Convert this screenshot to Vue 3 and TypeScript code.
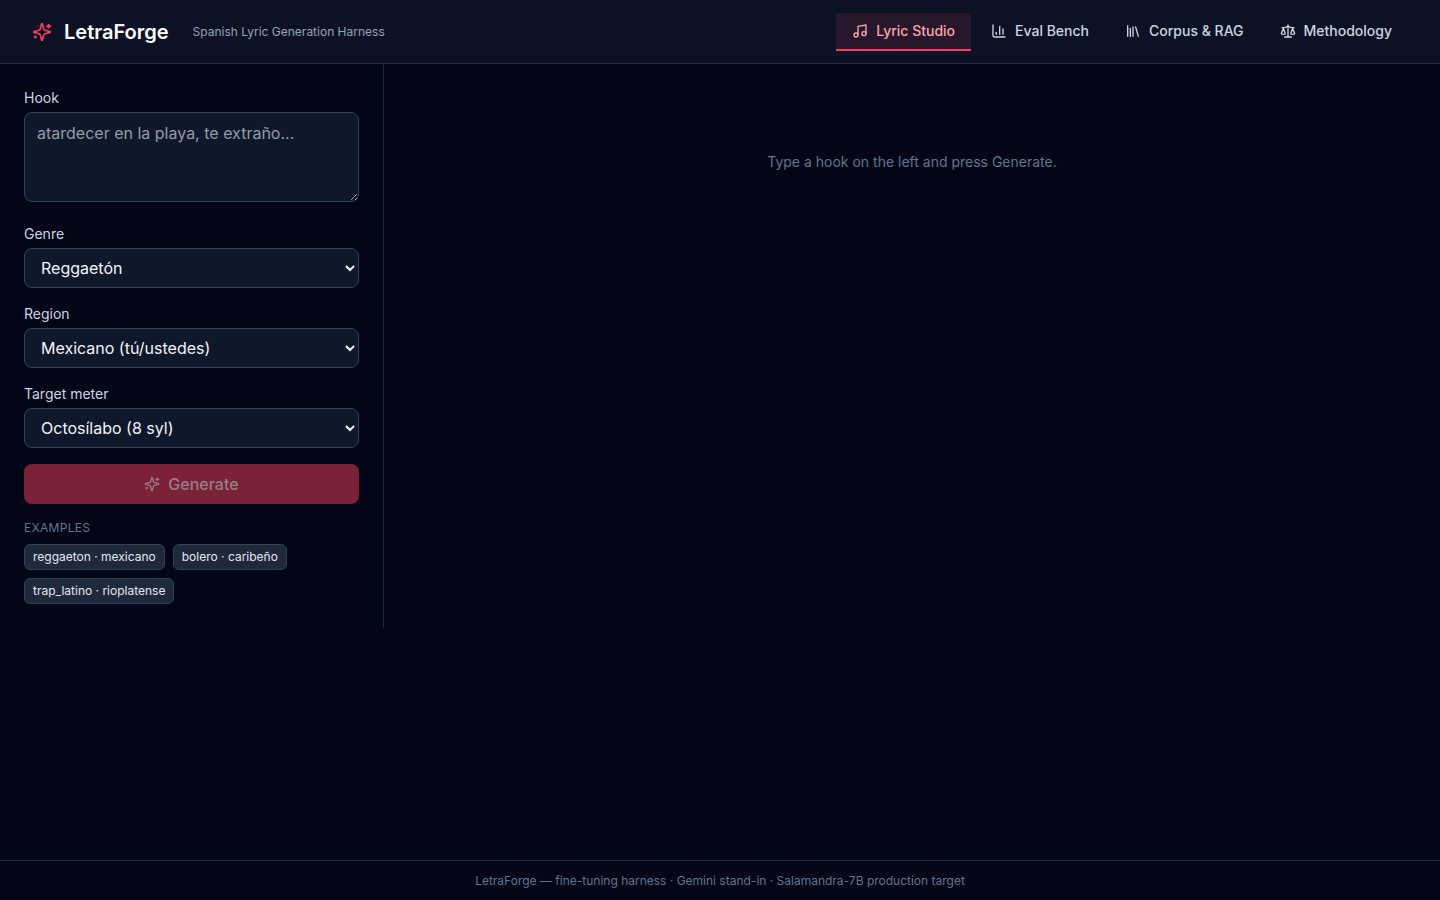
<script setup lang="ts">
import { ref } from 'vue'

interface Tab { id: string; label: string; paths: string[] }

const sparkles = [
  'M9.937 15.5A2 2 0 0 0 8.5 14.063l-6.135-1.582a.5.5 0 0 1 0-.962L8.5 9.936A2 2 0 0 0 9.937 8.5l1.582-6.135a.5.5 0 0 1 .963 0L14.063 8.5A2 2 0 0 0 15.5 9.937l6.135 1.581a.5.5 0 0 1 0 .964L15.5 14.063a2 2 0 0 0-1.437 1.437l-1.582 6.135a.5.5 0 0 1-.963 0z',
  'M20 3v4', 'M22 5h-4', 'M4 17v2', 'M5 18H3',
]

const tabs: Tab[] = [
  { id: 'studio', label: 'Lyric Studio', paths: ['M9 18V5l12-2v13', 'M9 18a3 3 0 1 1-6 0a3 3 0 1 1 6 0', 'M21 16a3 3 0 1 1-6 0a3 3 0 1 1 6 0'] },
  { id: 'eval', label: 'Eval Bench', paths: ['M3 3v16a2 2 0 0 0 2 2h16', 'M18 17V9', 'M13 17V5', 'M8 17v-3'] },
  { id: 'corpus', label: 'Corpus & RAG', paths: ['m16 6 4 14', 'M12 6v14', 'M8 8v12', 'M4 4v16'] },
  { id: 'method', label: 'Methodology', paths: ['m16 16 3-8 3 8c-.87.65-1.92 1-3 1s-2.13-.35-3-1Z', 'm2 16 3-8 3 8c-.87.65-1.92 1-3 1s-2.13-.35-3-1Z', 'M7 21h10', 'M12 3v18', 'M3 7h2c2 0 5-1 7-2 2 1 5 2 7 2h2'] },
]

const active = ref('studio')
const hook = ref('')
const fields = ref([
  { label: 'Genre', value: 'Reggaetón', options: ['Reggaetón', 'Bolero', 'Trap latino'] },
  { label: 'Region', value: 'Mexicano (tú/ustedes)', options: ['Mexicano (tú/ustedes)', 'Caribeño', 'Rioplatense'] },
  { label: 'Target meter', value: 'Octosílabo (8 syl)', options: ['Octosílabo (8 syl)'] },
])
const examples = ['reggaeton · mexicano', 'bolero · caribeño', 'trap_latino · rioplatense']
</script>

<template>
  <div class="app">
    <header class="header">
      <div class="brand">
        <svg class="icon logo" viewBox="0 0 24 24"><path v-for="d in sparkles" :key="d" :d="d" /></svg>
        <h1>LetraForge</h1>
        <span class="tagline">Spanish Lyric Generation Harness</span>
      </div>
      <nav class="tabs">
        <button v-for="t in tabs" :key="t.id" class="tab" :class="{ active: active === t.id }" @click="active = t.id">
          <svg class="icon" viewBox="0 0 24 24"><path v-for="d in t.paths" :key="d" :d="d" /></svg>
          {{ t.label }}
        </button>
      </nav>
    </header>

    <main class="main">
      <aside class="sidebar">
        <label class="field">
          <span class="label">Hook</span>
          <textarea v-model="hook" placeholder="atardecer en la playa, te extraño..."></textarea>
        </label>
        <label v-for="f in fields" :key="f.label" class="field">
          <span class="label">{{ f.label }}</span>
          <select v-model="f.value">
            <option v-for="o in f.options" :key="o">{{ o }}</option>
          </select>
        </label>
        <button class="generate" :disabled="!hook.trim()">
          <svg class="icon" viewBox="0 0 24 24"><path v-for="d in sparkles" :key="d" :d="d" /></svg>
          Generate
        </button>
        <div class="examples">
          <p class="caption">Examples</p>
          <div class="chips">
            <button v-for="e in examples" :key="e" class="chip">{{ e }}</button>
          </div>
        </div>
      </aside>
      <section class="output">
        <p>Type a hook on the left and press Generate.</p>
      </section>
    </main>

    <footer class="footer">LetraForge — fine-tuning harness · Gemini stand-in · Salamandra-7B production target</footer>
  </div>
</template>

<style>
body { margin: 0; background: #020617; }
</style>

<style scoped>
.app, .app * { box-sizing: border-box; }
.app {
  min-height: 900px;
  display: flex;
  flex-direction: column;
  background: #020617;
  color: #f1f5f9;
  font-family: Inter, "Liberation Sans", sans-serif;
  font-size: 16px;
  line-height: 24px;
}
button, select, textarea { font: inherit; color: inherit; letter-spacing: inherit; margin: 0; }
h1, p { margin: 0; }
.icon {
  width: 16px; height: 16px; flex: none;
  fill: none; stroke: currentColor; stroke-width: 2;
  stroke-linecap: round; stroke-linejoin: round;
}
.header {
  height: 64px;
  display: flex;
  align-items: center;
  justify-content: space-between;
  padding: 0 32px;
  background: #0c1224;
  border-bottom: 1px solid #1e293b;
}
.brand { display: flex; align-items: center; }
.logo { width: 20px; height: 20px; color: #f43f5e; margin-right: 12px; }
h1 { font-size: 20px; line-height: 28px; font-weight: 600; color: #fff; }
.tagline { margin-left: 24px; font-size: 12px; line-height: 16px; color: #94a3b8; }
.tabs { display: flex; gap: 4px; }
.tab {
  display: flex; align-items: center; gap: 8px;
  padding: 8px 16px;
  font-size: 14px; line-height: 20px; font-weight: 500;
  color: #cbd5e1;
  background: transparent;
  border: 0; border-bottom: 2px solid transparent;
}
.tab.active { color: #fda4af; background: #27172a; border-bottom-color: #f43f5e; }
.main { flex: 1; display: flex; align-items: flex-start; }
.sidebar {
  width: 384px;
  display: flex; flex-direction: column; gap: 16px;
  padding: 24px;
  border-right: 1px solid #1e293b;
}
.field { display: block; }
.label { display: block; margin-bottom: 4px; font-size: 14px; line-height: 20px; color: #cbd5e1; }
textarea {
  display: block; width: 100%; height: 90px; margin-bottom: 6px;
  padding: 8px 12px;
  background: #0f172a; border: 1px solid #334155; border-radius: 8px;
  resize: vertical;
}
textarea::placeholder { color: #949ca9; opacity: 1; }
select {
  display: block; width: 100%; height: 40px;
  padding: 8px 12px;
  background: #0f172a; border: 1px solid #334155; border-radius: 8px;
}
.generate {
  display: flex; align-items: center; justify-content: center; gap: 8px;
  height: 40px; padding: 0;
  font-weight: 500; color: #fff;
  background: #e11d48; border: 0; border-radius: 8px;
}
.generate:disabled { color: #92808a; background: #7b2138; }
.caption { font-size: 12px; line-height: 16px; letter-spacing: 0.3px; text-transform: uppercase; color: #64748b; }
.chips { display: flex; flex-wrap: wrap; gap: 8px; margin-top: 8px; }
.chip {
  padding: 4px 8px; font-size: 12px; line-height: 16px;
  background: #1e293b; border: 1px solid #334155; border-radius: 6px; color: #e2e8f0;
}
.output { flex: 1; padding-top: 88px; text-align: center; font-size: 14px; line-height: 20px; color: #64748b; }
.footer {
  height: 40px; padding: 12px 24px;
  border-top: 1px solid #1e293b;
  text-align: center; font-size: 12px; line-height: 16px; color: #64748b;
}
</style>
